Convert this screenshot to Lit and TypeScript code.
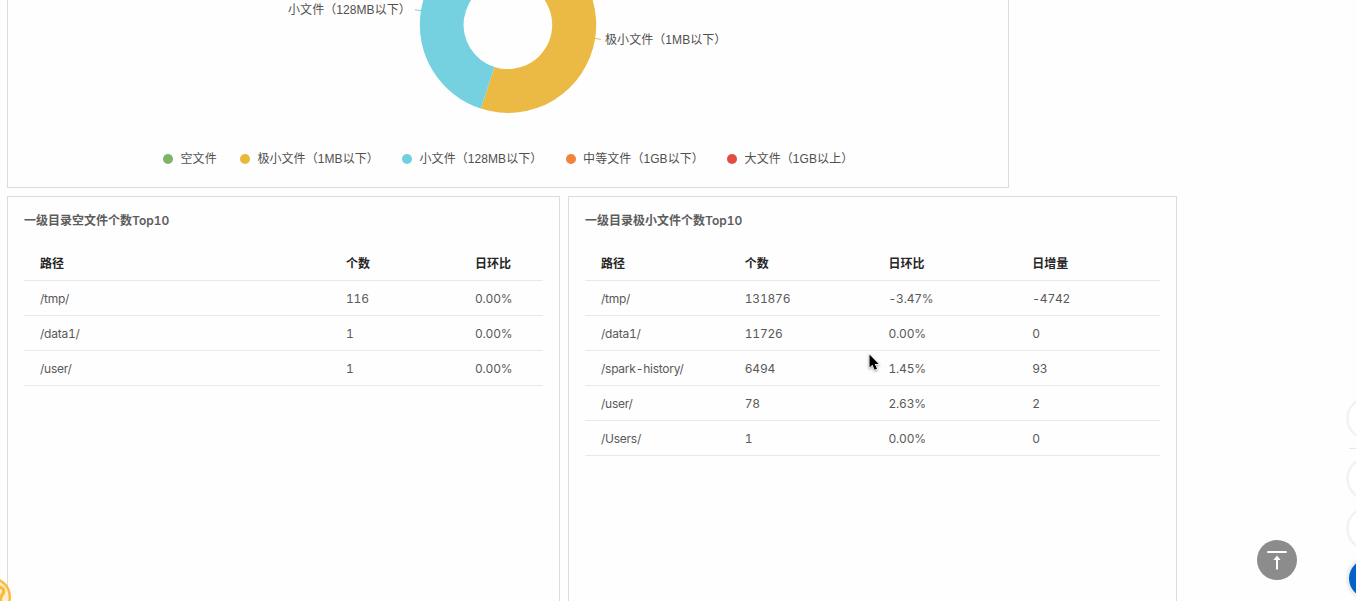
import { LitElement, html, css, svg } from "lit";
import { customElement, property } from "lit/decorators.js";
import { styleMap } from "lit/directives/style-map.js";

const LEGEND = [
  { label: "空文件", color: "#7eb36a" },
  { label: "极小文件（1MB以下）", color: "#eab839" },
  { label: "小文件（128MB以下）", color: "#6ed0e0" },
  { label: "中等文件（1GB以下）", color: "#ef843c" },
  { label: "大文件（1GB以上）", color: "#e24d42" },
];

@customElement("file-size-chart")
class FileSizeChart extends LitElement {
  static styles = css`
    :host {
      display: flex;
      flex-direction: column;
      box-sizing: border-box;
      width: 1002px;
      height: 188px;
      border: 1px solid #dcdcdc;
      border-top: 0;
      color: #464c54;
      font: 12px/18px "Liberation Sans", "Noto Sans CJK SC", sans-serif;
    }
    .plot {
      display: block;
      width: 1000px;
      height: 150px;
      flex: none;
    }
    .label {
      fill: #505050;
      font-size: 12px;
      letter-spacing: 0.07px;
    }
    .legend {
      display: flex;
      gap: 23.2px;
      padding-left: 155px;
      color: #505050;
      letter-spacing: 0.07px;
    }
    .item {
      display: flex;
      align-items: center;
      gap: 7.5px;
      white-space: nowrap;
    }
    .dot {
      width: 10px;
      height: 10px;
      border-radius: 50%;
    }
  `;

  render() {
    return html`
      <svg class="plot" viewBox="8 0 1000 150">
        ${svg`
          <path d="M508 -63.5A88.2 88.2 0 1 1 480.8 108.6L494.4 67A44.3 44.3 0 1 0 508 -19.5Z" fill="#ebba45"></path>
          <path d="M480.8 108.6A88.2 88.2 0 0 1 508 -63.5V-19.5A44.3 44.3 0 0 0 494.4 67Z" fill="#75d1e0"></path>
          <path d="M595 38.4L601 39.4" stroke="#ebba45" fill="none"></path>
          <path d="M415 9.8L421 10.7" stroke="#75d1e0" fill="none"></path>
          <text class="label" x="288" y="13.5">小文件（128MB以下）</text>
          <text class="label" x="605" y="43.5">极小文件（1MB以下）</text>
        `}
      </svg>
      <div class="legend">
        ${LEGEND.map(
          (l) => html`<div class="item">
            <span class="dot" style=${styleMap({ background: l.color })}></span>
            <span>${l.label}</span>
          </div>`
        )}
      </div>
    `;
  }
}

@customElement("top-table")
class TopTable extends LitElement {
  @property() heading = "";
  @property() columns = "";
  @property({ attribute: false }) head: string[] = [];
  @property({ attribute: false }) rows: string[][] = [];

  static styles = css`
    :host {
      display: block;
      box-sizing: border-box;
      height: 460px;
      padding: 15px 16px 0;
      border: 1px solid #dcdcdc;
      color: #595959;
      font: 12px/18px Inter, "Noto Sans CJK SC", sans-serif;
      font-variant-numeric: tabular-nums;
    }
    .heading {
      height: 18px;
      margin-bottom: 16px;
      font-weight: 600;
      color: #5c5c5c;
      white-space: nowrap;
    }
    .row {
      display: grid;
      box-sizing: border-box;
      height: 35px;
      padding-top: 1px;
      align-items: center;
      border-bottom: 1px solid #e8e8e8;
    }
    .row span {
      padding: 1px 0 0 16px;
      letter-spacing: -0.2px;
      white-space: nowrap;
    }
    .row span:first-child {
      letter-spacing: -0.25px;
    }
    .row.head {
      color: #262626;
      font-weight: 600;
    }
    .row.head span {
      letter-spacing: 0;
    }
  `;

  render() {
    const tracks = styleMap({ gridTemplateColumns: this.columns });
    return html`
      <div class="heading">${this.heading}</div>
      <div class="row head" style=${tracks}>${this.head.map((h) => html`<span>${h}</span>`)}</div>
      ${this.rows.map(
        (r) => html`<div class="row" style=${tracks}>${r.map((c) => html`<span>${c}</span>`)}</div>`
      )}
    `;
  }
}

@customElement("app-root")
class AppRoot extends LitElement {
  static styles = css`
    :host {
      display: block;
      position: relative;
      height: 601px;
      overflow: hidden;
      background: #fefefe;
    }
    .page {
      display: flex;
      flex-direction: column;
      gap: 8px;
      padding-left: 7px;
    }
    .tables {
      display: flex;
      gap: 8px;
    }
    .left {
      width: 553px;
    }
    .right {
      width: 609px;
    }
    .overlay {
      position: absolute;
      display: block;
    }
    .to-top {
      left: 1257px;
      top: 540px;
    }
    .dock {
      right: 0;
      top: 395px;
    }
    .help {
      left: 0;
      top: 570px;
    }
    .cursor {
      left: 865px;
      top: 350px;
    }
    .pointer {
      filter: drop-shadow(0 1px 1px #0006);
    }
  `;

  render() {
    return html`
      <div class="page">
        <file-size-chart></file-size-chart>
        <div class="tables">
          <top-table
            class="left"
            heading="一级目录空文件个数Top10"
            columns="306px 129px 1fr"
            .head=${["路径", "个数", "日环比"]}
            .rows=${[
              ["/tmp/", "116", "0.00%"],
              ["/data1/", "1", "0.00%"],
              ["/user/", "1", "0.00%"],
            ]}
          ></top-table>
          <top-table
            class="right"
            heading="一级目录极小文件个数Top10"
            columns="repeat(4, 1fr)"
            .head=${["路径", "个数", "日环比", "日增量"]}
            .rows=${[
              ["/tmp/", "131876", "-3.47%", "-4742"],
              ["/data1/", "11726", "0.00%", "0"],
              ["/spark-history/", "6494", "1.45%", "93"],
              ["/user/", "78", "2.63%", "2"],
              ["/Users/", "1", "0.00%", "0"],
            ]}
          ></top-table>
        </div>
      </div>

      <svg class="overlay to-top" width="40" height="40" viewBox="0 0 40 40">
        <circle cx="20" cy="20" r="20" fill="#8c8c8c"></circle>
        <path d="M10.3 11H29.7V13H10.3ZM20 15.5L23.6 20H21V29.5H19V20H16.4Z" fill="#fff"></path>
      </svg>

      <svg class="overlay dock" width="10" height="206" viewBox="1346 395 10 206">
        <g fill="#fff" stroke="#f2f2f2" stroke-width="2.5">
          <circle cx="1368.5" cy="418.5" r="21"></circle>
          <circle cx="1368.5" cy="478.5" r="21"></circle>
          <circle cx="1368.5" cy="528.5" r="21"></circle>
        </g>
        <path d="M1349 448.5H1356" stroke="#e8e8e8"></path>
        <circle cx="1368.5" cy="578.5" r="21" fill="#0363c8" stroke="#f0f0f0" stroke-width="3"></circle>
      </svg>

      <svg class="overlay help" width="12" height="31" viewBox="0 570 12 31">
        <circle cx="-9" cy="597" r="18.8" fill="#fff1d0" stroke="#fbbc3c" stroke-width="2.5"></circle>
        <path d="M-3 592C-3 586 3.6 586 3.6 591.5C3.6 595 .5 595 .5 599V602" fill="none" stroke="#fbbc3c" stroke-width="3.4"></path>
      </svg>

      <svg class="overlay cursor" width="18" height="24" viewBox="0 0 18 24">
        <path
          class="pointer"
          d="M4.5 4.5V17.5L7.4 14.8L9.6 19.8L12 18.8L9.8 14H13.7Z"
          fill="#000"
          stroke="#fff"
          stroke-width="1.4"
          paint-order="stroke"
        ></path>
      </svg>
    `;
  }
}
